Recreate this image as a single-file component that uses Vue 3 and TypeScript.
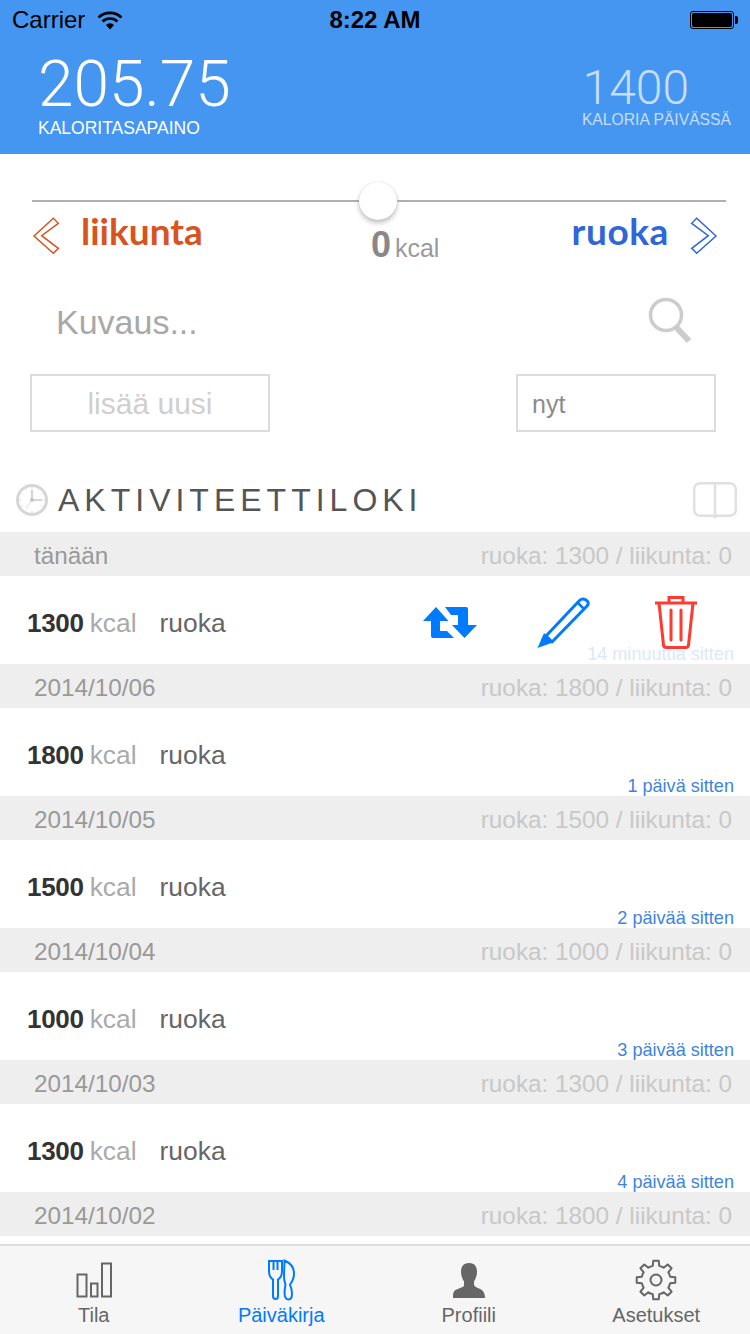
<template>
  <div class="app">
    <header class="top">
      <div class="status">
        <div class="carrier">
          Carrier
          <svg class="wifi" width="26" height="20" viewBox="0 0 26 20">
            <path d="M1.500 7.500a16.500 16.500 0 0 1 23 0" fill="none" stroke="#000" stroke-width="2.600" />
            <path d="M5.500 11.500a11 11 0 0 1 15 0" fill="none" stroke="#000" stroke-width="2.600" />
            <path d="M9 15a5.600 5.600 0 0 1 8 0l-4 4.400z" fill="#000" />
          </svg>
        </div>
        <div class="clock-text">8:22 AM</div>
        <div class="battery"><span class="battery-fill"></span><span class="battery-tip"></span></div>
      </div>
      <div class="totals">
        <div>
          <div class="balance">205.75</div>
          <div class="balance-label">KALORITASAPAINO</div>
        </div>
        <div class="goal">
          <div class="goal-num">1400</div>
          <div class="goal-label">KALORIA PÄIVÄSSÄ</div>
        </div>
      </div>
    </header>

    <section class="entry">
      <div class="slider">
        <span class="line left"></span>
        <span class="thumb"></span>
        <span class="line right"></span>
      </div>
      <div class="kinds">
        <div class="kind">
          <svg width="28" height="38" viewBox="0 0 28 38">
            <path d="M2 19 21.300 1.300l5 5L9.700 18.700l16.600 12.600-5 5z" fill="none" stroke="#d9531e" stroke-width="1.500" />
          </svg>
          <span class="kind-name sport">liikunta</span>
        </div>
        <div class="amount"><b>0</b><span class="amount-unit">kcal</span></div>
        <div class="kind">
          <span class="kind-name food">ruoka</span>
          <svg width="28" height="38" viewBox="0 0 28 38">
            <path d="M26 19 6.700 1.300l-5 5 16.600 12.400L1.700 31.300l5 5z" fill="none" stroke="#2f66d8" stroke-width="1.500" />
          </svg>
        </div>
      </div>
      <div class="search">
        <span class="placeholder">Kuvaus...</span>
        <svg class="search-icon" width="46" height="46" viewBox="0 0 46 46">
          <circle cx="18" cy="18" r="15.500" fill="none" stroke="#ccc" stroke-width="3.500" />
          <path d="M28 30l13 14" fill="none" stroke="#ccc" stroke-width="6" />
        </svg>
      </div>
      <div class="controls">
        <div class="add">lisää uusi</div>
        <div class="when">nyt</div>
      </div>
    </section>

    <div class="log-head">
      <svg width="34" height="34" viewBox="0 0 34 34">
        <circle cx="17" cy="17" r="14.500" fill="none" stroke="#d6d6d6" stroke-width="3" />
        <path d="M17 7v10h10" fill="none" stroke="#c8c8c8" stroke-width="1.600" />
        <path d="M17 17l-6 8" fill="none" stroke="#ddd" stroke-width="1" />
        <circle cx="17" cy="17" r="2" fill="#c4c4c4" />
        <path d="M17 4v2M17 28v2M4 17h2M28 17h2M10.500 5.700l1 1.700M23.500 5.700l-1 1.700M10.500 28.300l1-1.700M23.500 28.300l-1-1.700M5.700 10.500l1.700 1M28.300 10.500l-1.700 1M5.700 23.500l1.700-1M28.300 23.500l-1.700-1" stroke="#ddd" stroke-width="1" />
      </svg>
      <span class="log-title">AKTIVITEETTILOKI</span>
      <svg class="book" width="46" height="38" viewBox="0 0 46 38">
        <rect x="2.200" y="2.200" width="41.600" height="32.600" rx="6" fill="none" stroke="#e0e0e0" stroke-width="2.500" />
        <path d="M23 2v35.500" fill="none" stroke="#e0e0e0" stroke-width="2.500" />
      </svg>
    </div>

    <div class="log">
      <template v-for="(day, i) in days" :key="day.label">
        <div class="day">
          <span class="day-name">{{ day.label }}</span>
          <span class="day-sum">ruoka: {{ day.kcal }} / liikunta: 0</span>
        </div>
        <div v-if="day.ago" class="row">
          <div class="row-main">
            <b>{{ day.kcal }}</b>
            <span class="unit">kcal</span>
            <span class="what">ruoka</span>
            <div v-if="i === 0" class="actions">
              <svg width="54" height="34" viewBox="0 0 54 34">
                <path d="M13 1 25.500 15H17v10h7l7 7H10q-2 0-2-2V15H0z" fill="#007aff" />
                <path d="M41.500 32 29 19h6V9h-7l-6-8h21q2 0 2 2v16h9z" fill="#007aff" />
              </svg>
              <svg width="54" height="56" viewBox="0 0 54 56">
                <path d="M9 41 42 6q3-3.500 7-1t1 6L15 47z" fill="none" stroke="#007aff" stroke-width="3" stroke-linejoin="round" />
                <path d="M.5 53 7 38l10 9z" fill="#007aff" />
                <path d="M40 7l7.500 7.500" fill="none" stroke="#007aff" stroke-width="2.500" />
              </svg>
              <svg class="trash" width="44" height="54" viewBox="0 0 44 54">
                <path d="M1 8h42M15 8V2.500h14V8" fill="none" stroke="#ff3b30" stroke-width="3" />
                <path d="M5 8l4.500 42q.3 2.500 3 2.500h19q2.700 0 3-2.500L39 8" fill="none" stroke="#ff3b30" stroke-width="3" />
                <path d="M17 15v30M27 15v30" fill="none" stroke="#ff3b30" stroke-width="3" stroke-linecap="round" />
              </svg>
            </div>
          </div>
          <div class="ago" :class="{ faded: i === 0 }">{{ day.ago }}</div>
        </div>
      </template>
    </div>

    <nav class="tabs">
      <div v-for="tab in tabs" :key="tab.name" class="tab" :class="{ active: tab.active }">
        <svg v-if="tab.name === 'Tila'" width="40" height="42" viewBox="0 0 40 42">
          <path d="M3.500 15.500h9v22h-9zM17 24.500h6.500v13H17zM28 4.500h9v33h-9z" fill="none" stroke="#666" stroke-width="2" />
        </svg>
        <svg v-else-if="tab.name === 'Päiväkirja'" width="28" height="42" viewBox="0 0 28 42">
          <path d="M2 2v10q0 6 4 8.500V37q0 3 2.500 3t2.500-3V20.500q4-2.500 4-8.500V2zM6.500 2v9M10.500 2v9" fill="none" stroke="#007aff" stroke-width="2" />
          <path d="M17.500 1.500q9.500 4 9.500 13 0 6-4 11 2 5 2 9 0 6-3.500 6t-4-6q0-4 1-9-1.500-4-1.500-8z" fill="none" stroke="#007aff" stroke-width="2" />
        </svg>
        <svg v-else-if="tab.name === 'Profiili'" width="40" height="42" viewBox="0 -1 40 42">
          <path d="M20 3c6 0 8 4 8 9 0 4-1.500 7-3 9.500v3q0 2 5 4 6 2 6 9.500H4c0-7.500 1-7.500 6-9.500 5-2 5-2 5-4v-3c-1.500-2.500-3-5.500-3-9.500 0-5 2-9 8-9z" fill="#666" />
        </svg>
        <svg v-else width="42" height="42" viewBox="0 0 42 42">
          <circle cx="21" cy="21" r="5.500" fill="none" stroke="#666" stroke-width="2" />
          <path :d="gearPath" fill="none" stroke="#666" stroke-width="2" stroke-linejoin="round" />
        </svg>
        <span class="tab-name">{{ tab.name }}</span>
      </div>
    </nav>
  </div>
</template>

<script setup lang="ts">
interface Day {
  label: string;
  kcal: number;
  ago?: string;
}

const days: Day[] = [
  { label: 'tänään', kcal: 1300, ago: '14 minuuttia sitten' },
  { label: '2014/10/06', kcal: 1800, ago: '1 päivä sitten' },
  { label: '2014/10/05', kcal: 1500, ago: '2 päivää sitten' },
  { label: '2014/10/04', kcal: 1000, ago: '3 päivää sitten' },
  { label: '2014/10/03', kcal: 1300, ago: '4 päivää sitten' },
  { label: '2014/10/02', kcal: 1800 },
];

const tabs = [
  { name: 'Tila', active: false },
  { name: 'Päiväkirja', active: true },
  { name: 'Profiili', active: false },
  { name: 'Asetukset', active: false },
];

function polar(r: number, deg: number): string {
  const a = ((deg - 90) * Math.PI) / 180;
  return `${(21 + r * Math.cos(a)).toFixed(2)} ${(21 + r * Math.sin(a)).toFixed(2)}`;
}

// 8 teeth, the first one pointing straight up
const gearPath = Array.from({ length: 8 }, (_, i) => {
  const a = i * 45;
  const start = i === 0 ? 'M' : 'A14.5 14.5 0 0 1 ';
  return `${start}${polar(14.5, a - 13)}L${polar(19.5, a - 8)}L${polar(19.5, a + 8)}L${polar(14.5, a + 13)}`;
}).join('') + `A14.5 14.5 0 0 1 ${polar(14.5, -13)}Z`;
</script>

<style>
body {
  background: #fff;
}
</style>

<style scoped>
.app {
  width: 750px;
  height: 1334px;
  display: flex;
  flex-direction: column;
  overflow: hidden;
  background: #fff;
  font-family: "Liberation Sans", Arial, sans-serif;
}

.top {
  height: 154px;
  background: #4596f1;
  color: #fff;
  flex: none;
}

.status {
  height: 40px;
  padding: 0 12px;
  display: grid;
  grid-template-columns: 1fr auto 1fr;
  align-items: center;
  color: #000;
  font-size: 24px;
}

.carrier {
  display: flex;
  align-items: center;
  gap: 12px;
}

.clock-text {
  font-weight: 700;
}

.battery {
  justify-self: end;
  width: 40px;
  height: 14px;
  border: 1px solid #000;
  border-radius: 3px;
  padding: 1px;
  position: relative;
  margin-right: 4px;
  box-sizing: content-box;
}

.battery-fill {
  display: block;
  height: 100%;
  background: #000;
  border-radius: 2px;
}

.battery-tip {
  position: absolute;
  right: -5px;
  top: 4px;
  width: 3px;
  height: 8px;
  background: #000;
  border-radius: 0 2px 2px 0;
}

.totals {
  display: flex;
  justify-content: space-between;
  align-items: flex-start;
  padding: 11px 19px 0 38px;
}

.balance {
  font-family: Roboto, sans-serif;
  font-weight: 300;
  font-size: 64px;
  line-height: 67px;
}

.balance-label {
  font-size: 17.500px;
  line-height: 20px;
}

.goal {
  text-align: right;
  padding-top: 13px;
  color: #c8ddf9;
}

.goal-num {
  font-family: Roboto, sans-serif;
  font-weight: 300;
  font-size: 48px;
  line-height: 47px;
  padding-right: 42px;
}

.goal-label {
  font-size: 15.700px;
  line-height: 18px;
}

.entry {
  flex: none;
  height: 328px;
  padding-top: 28px;
  box-sizing: border-box;
}

.slider {
  display: flex;
  align-items: center;
  height: 38px;
  padding: 0 24px 0 32px;
}

.line {
  height: 2px;
  background: #b0b0b0;
}

.line.left {
  flex: 0 0 327px;
}

.line.right {
  flex: 1;
}

.thumb {
  width: 38px;
  height: 38px;
  border-radius: 50%;
  background: #fff;
  box-shadow: 0 3px 5px rgba(0, 0, 0, 0.25), 0 0 1px rgba(0, 0, 0, 0.2);
}

.kinds {
  display: flex;
  justify-content: space-between;
  align-items: flex-start;
  padding: 0 32px;
  margin-top: -3px;
  height: 75px;
}

.kind {
  display: flex;
  align-items: center;
  gap: 21px;
  height: 38px;
}

.kind-name {
  font-family: Lato, sans-serif;
  font-weight: 700;
  font-size: 37px;
  line-height: 38px;
  margin-bottom: 10px;
}

.sport {
  color: #d9531e;
}

.food {
  color: #2f66d8;
  letter-spacing: 0.600px;
}

.amount {
  color: #9a9a9a;
  font-size: 25px;
  padding-top: 8px;
  margin-left: 36px;
  line-height: 40px;
}

.amount b {
  font-size: 36px;
  color: #888;
}

.amount-unit {
  margin-left: 4px;
}

.search {
  display: flex;
  justify-content: space-between;
  align-items: center;
  height: 60px;
  padding: 0 56px;
}

.search-icon {
  margin-top: -4px;
}

.placeholder {
  font-size: 34px;
  color: #a8a8a8;
}

.controls {
  display: flex;
  justify-content: space-between;
  padding: 0 34px 0 30px;
  margin-top: 22px;
}

.add,
.when {
  height: 58px;
  box-sizing: border-box;
  border: 2px solid #dcdcdc;
  display: flex;
  align-items: center;
  padding-top: 2px;
}

.add {
  width: 240px;
  justify-content: center;
  font-size: 30px;
  color: #cfcfcf;
}

.when {
  width: 200px;
  padding-left: 14px;
  font-size: 25px;
  color: #8c8c8c;
}

.log-head {
  flex: none;
  height: 50px;
  box-sizing: border-box;
  display: flex;
  align-items: center;
  padding: 0 12px 14px 15px;
  gap: 9px;
}

.log-title {
  font-size: 32px;
  letter-spacing: 5px;
  color: #555;
}

.book {
  margin-left: auto;
}

.log {
  flex: 1;
  min-height: 0;
  overflow: hidden;
}

.day {
  height: 44px;
  box-sizing: border-box;
  background: #eee;
  display: flex;
  justify-content: space-between;
  align-items: center;
  padding: 3px 18px 0 34px;
  font-size: 24.300px;
}

.day-name {
  color: #999;
}

.day-sum {
  color: #c8c8c8;
}

.row {
  height: 88px;
  box-sizing: border-box;
  padding-top: 32px;
}

.row-main {
  display: flex;
  align-items: center;
  height: 30px;
  padding-left: 27px;
  font-size: 26px;
}

.row-main b {
  color: #333;
  letter-spacing: -0.300px;
}

.unit {
  color: #aaa;
  margin-left: 6px;
  font-size: 26.400px;
}

.what {
  color: #666;
  margin-left: 23px;
  font-size: 26.400px;
}

.actions {
  display: flex;
  align-items: center;
  position: relative;
  z-index: 1;
  margin-left: 197px;
  gap: 60px;
}

.trash {
  margin-left: 3px;
  margin-top: -2px;
}

.ago {
  margin-top: 6px;
  line-height: 20px;
  text-align: right;
  padding-right: 16px;
  font-size: 18.100px;
  color: #3f83e0;
}

.ago.faded {
  color: #dbe8fa;
}

.tabs {
  flex: none;
  height: 90px;
  box-sizing: border-box;
  border-top: 2px solid #dcdcdc;
  background: #f6f6f6;
  display: grid;
  grid-template-columns: repeat(4, 1fr);
}

.tab {
  display: flex;
  flex-direction: column;
  align-items: center;
  padding-top: 13px;
  color: #666;
}

.tab.active {
  color: #007aff;
}

.tab-name {
  font-size: 20px;
  line-height: 24px;
  margin-top: 2px;
}
</style>
